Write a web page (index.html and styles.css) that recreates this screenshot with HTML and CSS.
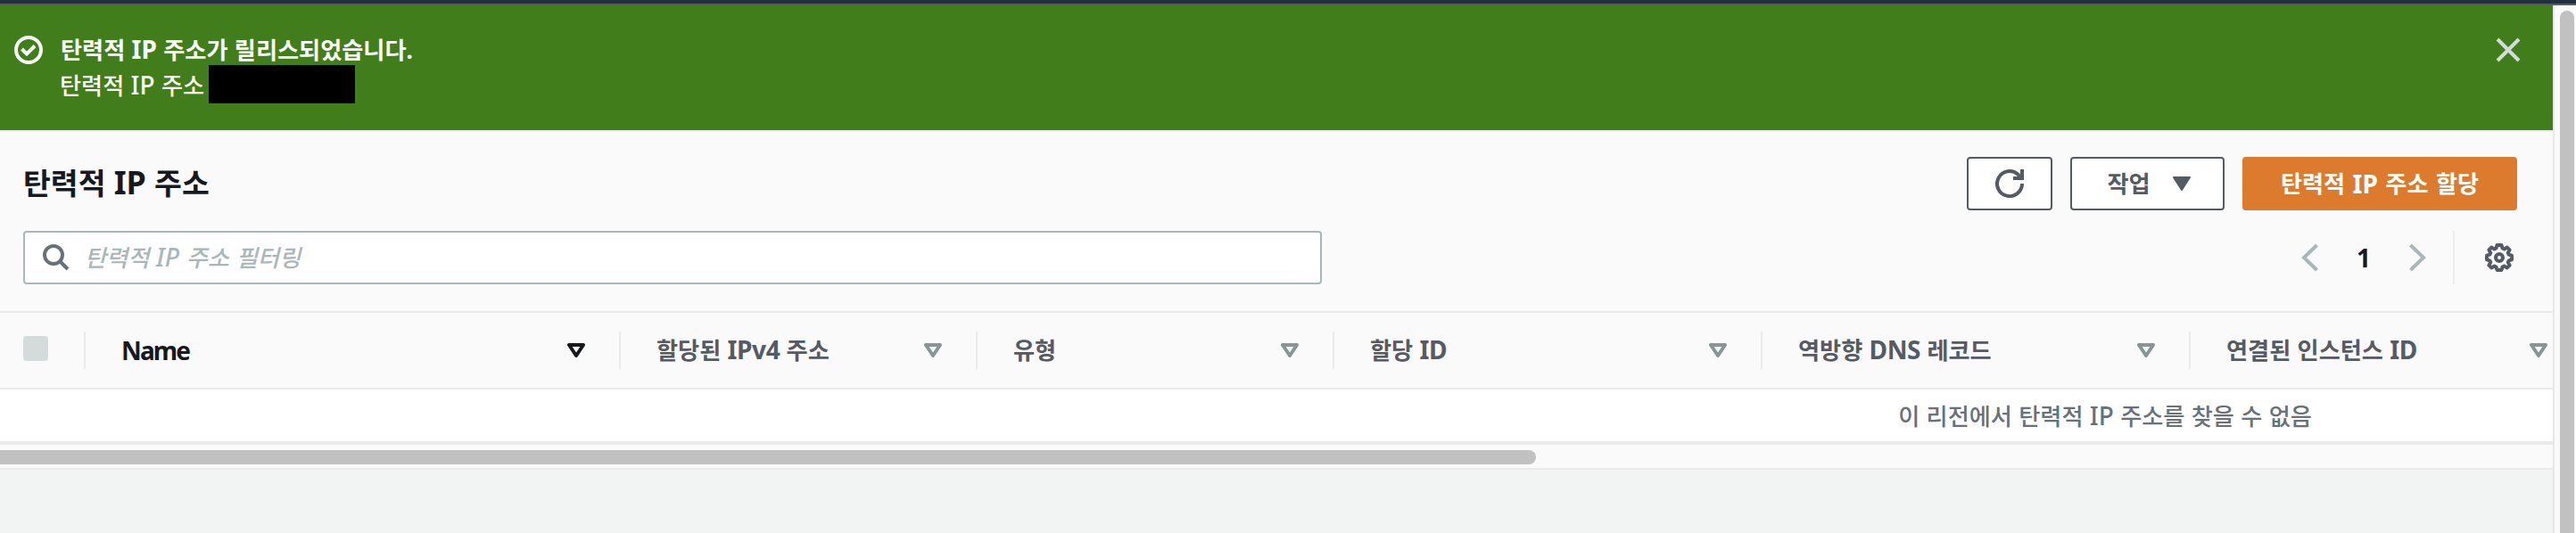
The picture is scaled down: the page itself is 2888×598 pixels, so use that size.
FILE: index.html
```html
<!DOCTYPE html>
<html lang="ko">
<head>
  <meta charset="UTF-8">
  <meta name="viewport" content="width=device-width, initial-scale=1.0">
  <title>탄력적 IP 주소</title>
  <link rel="stylesheet" href="styles.css">
</head>
<body>
  <div class="top-bar"></div>

  <div class="app">
    <main class="content">
      <div class="flash">
        <svg class="flash-icon" viewBox="0 0 32 32" fill="none" stroke="currentColor" stroke-width="4">
          <circle cx="16" cy="16" r="14"/>
          <path d="M8.5 15l5.5 5.5 9-9"/>
        </svg>
        <div class="flash-text">
          <div class="flash-title">탄력적 <span class="en">IP</span> 주소가 릴리스되었습니다.</div>
          <div class="flash-body">탄력적 <span class="en">IP</span> 주소<span class="redacted"></span></div>
        </div>
        <svg class="flash-close" viewBox="0 0 28 28" fill="none" stroke="currentColor" stroke-width="4">
          <path d="M2 2l24 24M26 2L2 26"/>
        </svg>
      </div>

      <div class="panel-header">
        <h1>탄력적 <span class="en">IP</span> 주소</h1>
        <div class="actions">
          <button class="btn btn-refresh" aria-label="refresh">
            <svg viewBox="0 0 32 32" fill="none" stroke="currentColor" stroke-width="4">
              <path d="M30 16a14 14 0 1 1-4.5-10.2L29 10"/>
              <path d="M30 0v10H20"/>
            </svg>
          </button>
          <button class="btn btn-menu">작업
            <svg class="caret" viewBox="0 0 20 16"><path d="M1 1h18l-9 14z" fill="currentColor" stroke="currentColor" stroke-width="2" stroke-linejoin="round"/></svg>
          </button>
          <button class="btn btn-primary">탄력적 <span class="en">IP</span> 주소 할당</button>
        </div>
      </div>

      <div class="toolbar">
        <div class="search">
          <svg viewBox="0 0 30 30" fill="none" stroke="currentColor" stroke-width="4">
            <circle cx="12" cy="12" r="10"/>
            <path d="M19 19l9 9"/>
          </svg>
          <span class="placeholder">탄력적 <span class="en">IP</span> 주소 필터링</span>
        </div>
        <div class="pagination">
          <svg class="arrow" viewBox="0 0 20 32" fill="none" stroke="currentColor" stroke-width="4"><path d="M17.5 2L3 16l14.5 14"/></svg>
          <span class="page">1</span>
          <svg class="arrow" viewBox="0 0 20 32" fill="none" stroke="currentColor" stroke-width="4"><path d="M2.5 2L17 16 2.5 30"/></svg>
        </div>
        <div class="settings">
          <svg viewBox="0 0 32 32" fill="none" stroke="currentColor" stroke-width="4" stroke-linejoin="round">
            <path d="M13.5 2h5l1 3.5 2 .9 3.3-1.8 2.8 2.8-1.8 3.3.9 2 3.3 1v4.6l-3.3 1-.9 2 1.8 3.3-2.8 2.8-3.3-1.8-2 .9-1 3.5h-5l-1-3.5-2-.9-3.3 1.8-2.8-2.8 1.8-3.3-.9-2-3.3-1v-4.6l3.3-1 .9-2-1.8-3.3 2.8-2.8 3.3 1.8 2-.9z"/>
            <circle cx="16" cy="16" r="4"/>
          </svg>
        </div>
      </div>

      <div class="table">
        <div class="row-head">
          <div class="th th-check"><span class="checkbox"></span></div>
          <div class="th th-name"><span class="en">Name</span><svg class="sort" viewBox="0 0 20 16"><path d="M2 2h16l-8 12z"/></svg></div>
          <div class="th th-ip"><span>할당된 <span class="en">IPv4</span> 주소</span><svg class="sort" viewBox="0 0 20 16"><path d="M2 2h16l-8 12z"/></svg></div>
          <div class="th th-type"><span>유형</span><svg class="sort" viewBox="0 0 20 16"><path d="M2 2h16l-8 12z"/></svg></div>
          <div class="th th-id"><span>할당 <span class="en">ID</span></span><svg class="sort" viewBox="0 0 20 16"><path d="M2 2h16l-8 12z"/></svg></div>
          <div class="th th-dns"><span>역방향 <span class="en">DNS</span> 레코드</span><svg class="sort" viewBox="0 0 20 16"><path d="M2 2h16l-8 12z"/></svg></div>
          <div class="th th-instance"><span>연결된 인스턴스 <span class="en">ID</span></span><svg class="sort" viewBox="0 0 20 16"><path d="M2 2h16l-8 12z"/></svg></div>
        </div>
        <div class="row-empty">이 리전에서 탄력적 <span class="en">IP</span> 주소를 찾을 수 없음</div>
      </div>
      <div class="scroll-x"><div class="thumb-x"></div></div>
    </main>

    <div class="scroll-y"><div class="thumb-y"></div></div>
  </div>
</body>
</html>
```
FILE: styles.css
```css
* {
  box-sizing: border-box;
}

body {
  margin: 0;
  height: 598px;
  display: flex;
  flex-direction: column;
  overflow: hidden;
  background-color: #f2f4f4;
  color: #16191f;
  font-family: "Noto Sans", "Noto Sans CJK KR", sans-serif;
  font-size: 26.2px;
  font-weight: 500;
  line-height: 40px;
  word-spacing: 0.5px;
}

svg {
  display: block;
  flex-shrink: 0;
}

/* latin runs are a little larger than the hangul */
.en {
  font-size: 1.07em;
  line-height: 1;
}

.top-bar {
  height: 6px;
  flex-shrink: 0;
  background-color: #232f3e;
  border-bottom: 2px solid #545b64;
}

.app {
  display: flex;
  flex: 1;
  min-height: 0;
}

.content {
  width: 2862px;
  overflow: hidden;
}

/* flash message */
.flash {
  display: flex;
  height: 140px;
  padding: 34px 36px 0 16px;
  background-color: #417e1b;
  color: #fafafa;
}

.flash-icon {
  width: 32px;
  height: 32px;
}

.flash-text {
  flex: 1;
  padding: 0 0 0 20px;
  margin-top: -4px;
}

.flash-title {
  font-weight: 700;
}

.flash-body {
  display: flex;
  align-items: baseline;
  margin-left: -1px;
  white-space: pre;
}

.redacted {
  align-self: flex-start;
  width: 164px;
  height: 43px;
  margin: -3px 0 0 5px;
  background-color: #000;
}

.flash-close {
  width: 28px;
  height: 28px;
  margin-top: 2px;
  color: #d5dbdb;
}

/* panel */
.panel-header {
  display: flex;
  align-items: center;
  justify-content: space-between;
  height: 113px;
  padding: 28px 40px 23px 26px;
  border-top: 2px solid #eaeded;
  background-color: #fafafa;
}

h1 {
  margin: 0 0 2px;
  font-size: 33.5px;
  font-weight: 700;
}

.actions {
  display: flex;
  gap: 20px;
}

.btn {
  display: flex;
  align-items: center;
  justify-content: center;
  height: 60px;
  padding: 0;
  border: 2px solid #545b64;
  border-radius: 4px;
  background-color: #fff;
  color: #545b64;
  font: inherit;
  font-weight: 700;
  word-spacing: 1.6px;
  white-space: pre;
}

.btn-refresh {
  width: 96px;
}

.btn-refresh svg {
  width: 32px;
  height: 32px;
}

.btn-menu {
  width: 173px;
  padding-left: 3px;
  white-space: normal;
  gap: 25px;
}

.caret {
  width: 20px;
  height: 16px;
}

.btn-primary {
  width: 308px;
  border-color: #dc7b2d;
  background-color: #dc7b2d;
  color: #fff;
}

.toolbar {
  display: flex;
  align-items: center;
  height: 90px;
  padding: 0 44px 30px 26px;
  background-color: #fafafa;
}

.search {
  display: flex;
  align-items: center;
  width: 1456px;
  height: 60px;
  margin-right: auto;
  padding-left: 20px;
  border: 2px solid #aab7b8;
  border-radius: 4px;
  background-color: #fff;
  color: #687078;
}

.search svg {
  width: 30px;
  height: 30px;
}

.placeholder {
  margin-left: 17px;
  color: #aab7b8;
  font-style: italic;
  word-spacing: 1px;
}

.pagination {
  display: flex;
  align-items: center;
  margin-right: 30px;
}

.arrow {
  width: 20px;
  height: 32px;
  color: #aab7b8;
}

.page {
  width: 100px;
  text-align: center;
  font-size: 28px;
  font-weight: 700;
}

.settings {
  display: flex;
  align-items: center;
  height: 60px;
  padding-left: 34px;
  border-left: 2px solid #eaeded;
  color: #545b64;
}

.settings svg {
  width: 32px;
  height: 32px;
}

/* table */
.table {
  width: 4720px;
}

.row-head {
  display: flex;
  align-items: center;
  height: 88px;
  border-top: 2px solid #eaeaea;
  border-bottom: 2px solid #eaeaea;
  background-color: #fafafa;
  color: #545b64;
  font-weight: 700;
}

.th {
  display: flex;
  align-items: center;
  justify-content: space-between;
  height: 42px;
  padding: 0 38px 0 40px;
  border-right: 2px solid #eaeaea;
}

.th .en {
  letter-spacing: -0.4px;
}

.th-check {
  width: 96px;
  padding: 0 0 0 26px;
}

.checkbox {
  width: 28px;
  height: 28px;
  margin-top: -4px;
  border-radius: 4px;
  background-color: #d5dbdb;
}

.th-name {
  width: 600px;
  color: #16191f;
}

.th-name .en {
  letter-spacing: -1.9px;
}

.th-ip,
.th-type {
  width: 400px;
}

.th-id,
.th-dns {
  width: 480px;
}

.th-instance {
  width: 440px;
}

.sort {
  width: 20px;
  height: 16px;
  fill: none;
  stroke: #879596;
  stroke-width: 4;
  stroke-linejoin: round;
}

.th-name .sort {
  stroke: #16191f;
}

.row-empty {
  height: 62px;
  padding-top: 10px;
  border-bottom: 4px solid #eaeaea;
  background-color: #fff;
  color: #687078;
  text-align: center;
}

/* scrollbars */
.scroll-x {
  height: 28px;
  padding-top: 6px;
  border-bottom: 2px solid #eaeaea;
  background-color: #fafafa;
}

.thumb-x {
  width: 1722px;
  height: 16px;
  border-radius: 0 8px 8px 0;
  background-color: #c1c1c1;
}

.scroll-y {
  width: 26px;
  padding: 6px 2px 0 6px;
  border-left: 2px solid #e8e8e8;
  background-color: #fafafa;
}

.thumb-y {
  width: 16px;
  height: 100%;
  border-radius: 8px 8px 0 0;
  background-color: #c1c1c1;
}
```
